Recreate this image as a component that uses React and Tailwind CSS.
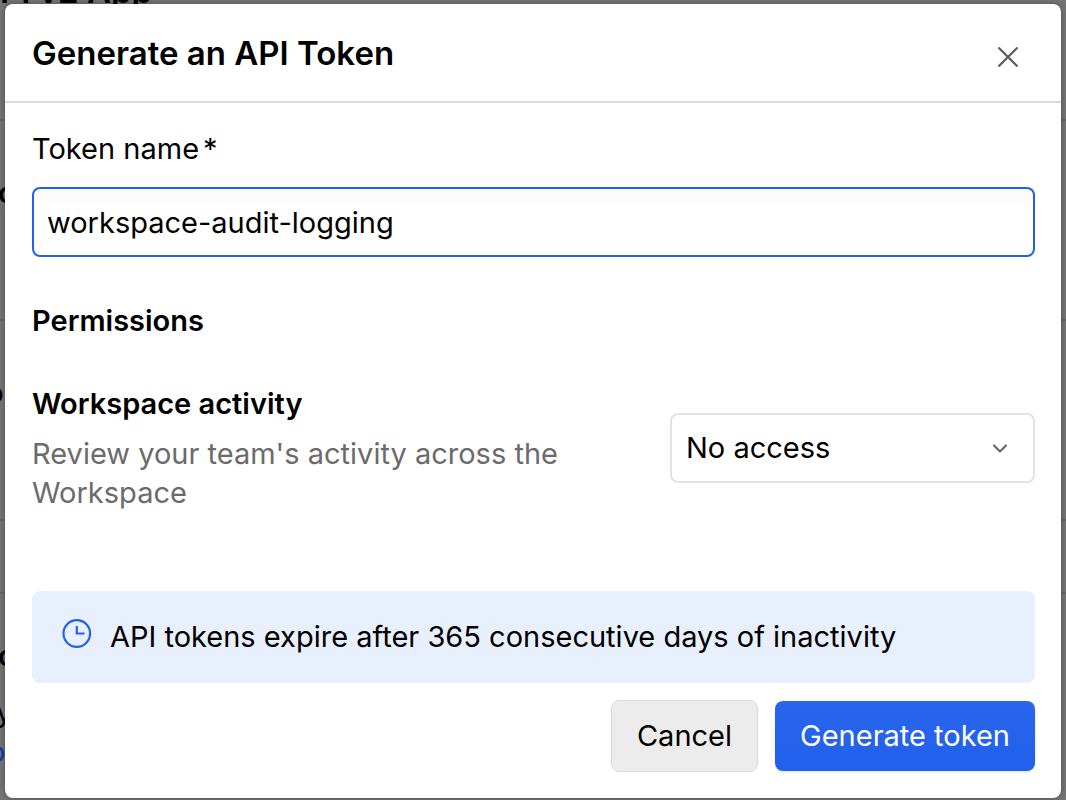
import { useState } from 'react';

const settings = [
    { title: 'c', className: 'h-[200px] pt-[52px]' },
    { title: 'o', className: 'h-[200px] pt-[52px] pl-0 -ml-3' },
    { title: '', className: 'h-[73px]' },
];

function AppSettings() {
    return (
        <div
            aria-hidden="true"
            className="h-screen overflow-hidden bg-[#757575] text-[29px] leading-10 text-black"
        >
            <div className="-ml-6 flex h-[119px] items-start">
                <h1 className="-mt-[29px] text-[33px] font-semibold">
                    API v2 App
                </h1>
            </div>
            {settings.map((item) => (
                <section
                    key={item.className + item.title}
                    className={`border-t-2 border-[#676767] ${item.className}`}
                >
                    <h2 className="-ml-0.5 font-semibold">{item.title}</h2>
                </section>
            ))}
            <section className="border-t-2 border-[#676767] pt-[42px]">
                <h2 className="-ml-0.5 font-semibold">c</h2>
                <p className="-ml-1 pt-4">y</p>
                <a href="#docs" className="-ml-3 block text-[#123a9c]">
                    o
                </a>
            </section>
        </div>
    );
}

function CloseIcon() {
    return (
        <svg
            viewBox="0 0 20 20"
            className="size-5"
            fill="none"
            stroke="#5e5e5e"
            strokeWidth="2.3"
            strokeLinecap="round"
        >
            <path d="M1.2 1.2l17.6 17.6M18.8 1.2L1.2 18.8" />
        </svg>
    );
}

function ChevronIcon() {
    return (
        <svg
            viewBox="0 0 16 10"
            className="h-[10px] w-4"
            fill="none"
            stroke="#6a6a6a"
            strokeWidth="2.2"
            strokeLinecap="round"
            strokeLinejoin="round"
        >
            <path d="M2 2.5l6 6 6-6" />
        </svg>
    );
}

function ClockIcon() {
    return (
        <svg
            viewBox="0 0 30 30"
            className="size-[30px]"
            fill="none"
            stroke="#2161f0"
            strokeWidth="2.2"
        >
            <circle cx="14.8" cy="14.5" r="13.3" />
            <path d="M14.8 7v7.5h7.7" />
        </svg>
    );
}

export default function App() {
    const [name, setName] = useState('workspace-audit-logging');
    const [access, setAccess] = useState('none');

    const handleSubmit = (event) => {
        event.preventDefault();
    };

    return (
        <div className="relative font-['Inter',sans-serif] [font-variation-settings:'opsz'_14]">
            <AppSettings />

            <div className="absolute inset-0 px-[5px] pt-1 pb-[2px]">
                <div
                    role="dialog"
                    aria-labelledby="dialog-title"
                    className="flex h-full flex-col rounded-lg bg-white text-[29px] leading-10 text-black shadow-[0_0_6px_rgba(0,0,0,0.35)]"
                >
                    <header className="flex h-[99px] shrink-0 items-center justify-between border-b-2 border-[#dadada] pr-8 pl-[27px]">
                        <h2
                            id="dialog-title"
                            className="text-[33px] leading-10 font-semibold"
                        >
                            Generate an API Token
                        </h2>
                        <button
                            type="button"
                            aria-label="Close"
                            className="mt-2 p-[11px]"
                        >
                            <CloseIcon />
                        </button>
                    </header>

                    <form
                        onSubmit={handleSubmit}
                        className="flex flex-1 flex-col px-[26px] pt-[26px] pb-[26px] pl-[27px]"
                    >
                        <label htmlFor="token-name">
                            Token name<span className="ml-1">*</span>
                        </label>
                        <input
                            id="token-name"
                            type="text"
                            required
                            value={name}
                            onChange={(event) => setName(event.target.value)}
                            className="mt-[18px] h-[70px] w-full rounded-lg border-2 border-[#2360e8] bg-linear-to-b from-[#f9f9f9] to-white to-30% px-[13px] outline-none"
                        />

                        <h3 className="mt-11 font-semibold">Permissions</h3>

                        <div className="mt-[43px] flex items-center justify-between gap-8">
                            <div className="max-w-[560px]">
                                <h4 className="font-semibold">
                                    <label htmlFor="workspace-activity">
                                        Workspace activity
                                    </label>
                                </h4>
                                <p className="mt-[10px] leading-[39px] text-[#6b6b6b]">
                                    Review your team's activity across the
                                    Workspace
                                </p>
                            </div>
                            <div className="relative w-[365px] shrink-0">
                                <select
                                    id="workspace-activity"
                                    value={access}
                                    onChange={(event) =>
                                        setAccess(event.target.value)
                                    }
                                    className="h-[70px] w-full appearance-none rounded-lg border-2 border-[#e3e3e3] bg-white px-[14px]"
                                >
                                    <option value="none">No access</option>
                                    <option value="read">Read</option>
                                </select>
                                <span className="pointer-events-none absolute inset-y-0 right-[27px] flex items-center">
                                    <ChevronIcon />
                                </span>
                            </div>
                        </div>

                        <div className="mt-auto flex h-[92px] items-center gap-[18px] rounded-lg bg-[#e8effd] px-[30px]">
                            <span className="shrink-0 pb-[7px]">
                                <ClockIcon />
                            </span>
                            <p>
                                API tokens expire after 365 consecutive days of
                                inactivity
                            </p>
                        </div>

                        <div className="mt-[17px] flex items-center justify-end gap-[17px]">
                            <button
                                type="button"
                                className="h-[72px] rounded-lg border border-[#dcdcdc] bg-[#ececec] px-[25px]"
                            >
                                Cancel
                            </button>
                            <button
                                type="submit"
                                className="h-[70px] rounded-lg bg-linear-to-b from-[#2966ec] to-[#2160ed] px-[25px] text-white shadow-sm"
                            >
                                Generate token
                            </button>
                        </div>
                    </form>
                </div>
            </div>
        </div>
    );
}
